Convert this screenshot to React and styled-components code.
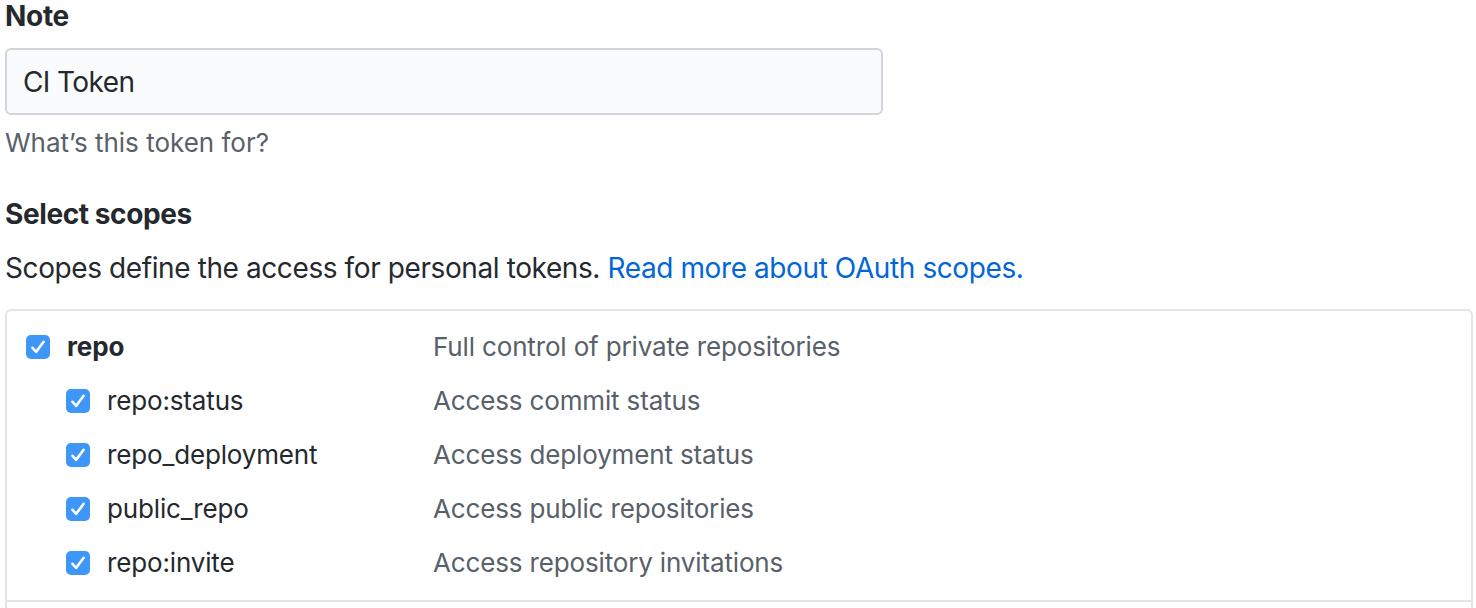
import React from "react";
import styled, { createGlobalStyle } from "styled-components";

const Global = createGlobalStyle`
  html, body { margin: 0; padding: 0; background: #fff; }
  body {
    font-family: Inter, "Liberation Sans", Arial, sans-serif;
    color: #24292e;
    -webkit-font-smoothing: antialiased;
  }
`;

const Page = styled.div`
  padding: 0 3px 0 5px;
`;

const Label = styled.div`
  font-size: 28px;
  font-weight: 700;
  line-height: 32px;
  letter-spacing: -0.3px;
`;

const Input = styled.div`
  box-sizing: border-box;
  width: 878px;
  height: 67px;
  margin-top: 16px;
  border: 2px solid #d1d5da;
  border-radius: 6px;
  background: #fafbfc;
  padding-left: 16px;
  display: flex;
  align-items: center;
  font-size: 28px;
  letter-spacing: -0.6px;
  color: #24292e;
`;

const Note = styled.div`
  margin-top: 10px;
  font-size: 26px;
  line-height: 36px;
  color: #586069;
`;

const Heading = styled.div`
  margin-top: 35px;
  font-size: 28px;
  font-weight: 700;
  line-height: 36px;
  letter-spacing: -0.4px;
`;

const Desc = styled.p`
  margin: 18px 0 0 0;
  font-size: 28px;
  line-height: 36px;
  letter-spacing: -0.4px;
  a { color: #0366d6; text-decoration: none; }
`;

const Box = styled.div`
  margin-top: 23px;
  padding-bottom: 20px;
  border: 2px solid #e1e4e8;
  border-bottom: none;
  border-radius: 6px 6px 0 0;
`;

const Group = styled.ul`
  list-style: none;
  margin: 0;
  padding: 9px 0 10px 19px;
  border-bottom: 2px solid #e1e4e8;
`;

const Row = styled.li`
  display: grid;
  grid-template-columns: 407px 1fr;
  align-items: center;
  height: 54px;
  font-size: 26px;
  line-height: 32px;
  letter-spacing: -0.15px;
`;

const Name = styled.label`
  display: flex;
  align-items: center;
  gap: 17px;
  padding-left: ${(p) => (p.$sub ? 40 : 0)}px;
  font-weight: ${(p) => (p.$sub ? 400 : 700)};
  color: #24292e;
`;

const Description = styled.span`
  color: #586069;
`;

const Check = () => (
  <svg width="24" height="24" viewBox="0 0 24 24">
    <rect x="0" y="0" width="24" height="24" rx="5" fill="#3e97f8" />
    <path
      d="M6.5 12.8 L10.2 16.8 L17.6 6.8"
      fill="none"
      stroke="#fff"
      strokeWidth="2.6"
      strokeLinecap="round"
      strokeLinejoin="round"
    />
  </svg>
);

const scopes = [
  { name: "repo", desc: "Full control of private repositories" },
  { name: "repo:status", desc: "Access commit status", sub: true },
  { name: "repo_deployment", desc: "Access deployment status", sub: true },
  { name: "public_repo", desc: "Access public repositories", sub: true },
  { name: "repo:invite", desc: "Access repository invitations", sub: true },
];

export default function App() {
  return (
    <Page>
      <Global />
      <Label>Note</Label>
      <Input>CI Token</Input>
      <Note>What’s this token for?</Note>
      <Heading>Select scopes</Heading>
      <Desc>
        Scopes define the access for personal tokens.{" "}
        <a href="#">Read more about OAuth scopes.</a>
      </Desc>
      <Box>
        <Group>
          {scopes.map((s) => (
            <Row key={s.name}>
              <Name $sub={s.sub}>
                <Check />
                {s.name}
              </Name>
              <Description>{s.desc}</Description>
            </Row>
          ))}
        </Group>
      </Box>
    </Page>
  );
}
